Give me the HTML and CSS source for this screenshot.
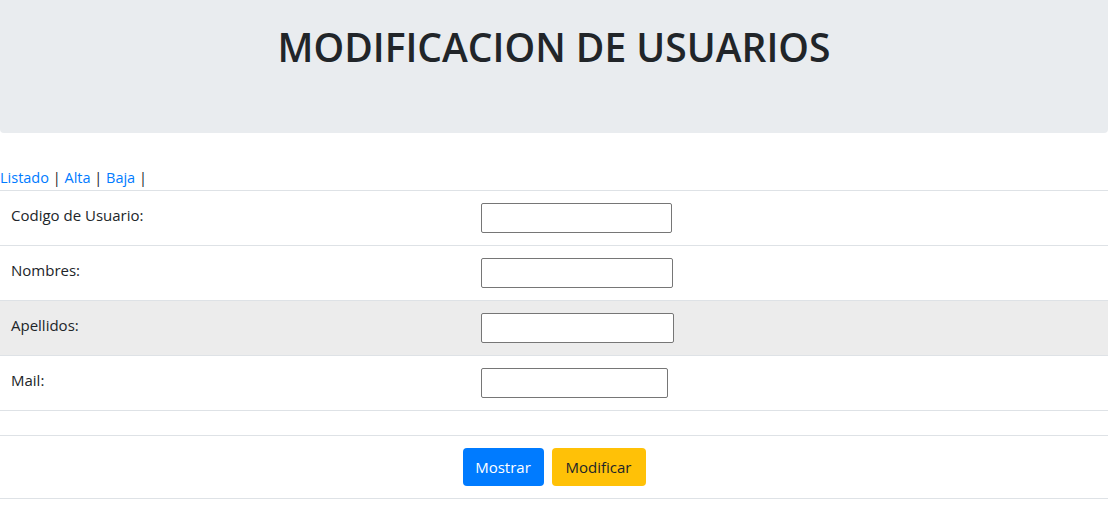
FILE: index.html
```html
<!DOCTYPE html>
<html lang="es">
<head>
<meta charset="utf-8">
<title>Modificacion de Usuarios</title>
<link rel="stylesheet" href="styles.css">
</head>
<body>
<div class="jumbotron">
  <h1 class="title">MODIFICACION DE USUARIOS</h1>
</div>
<nav class="links">
  <a href="#">Listado</a> | <a href="#">Alta</a> | <a href="#">Baja</a> |
</nav>
<div class="table">
  <div class="row">
    <div class="cell label">Codigo de Usuario:</div>
    <div class="cell"><input class="field w-191" type="text"></div>
  </div>
  <div class="row">
    <div class="cell label">Nombres:</div>
    <div class="cell"><input class="field w-192" type="text"></div>
  </div>
  <div class="row row-hover">
    <div class="cell label">Apellidos:</div>
    <div class="cell"><input class="field w-193" type="text"></div>
  </div>
  <div class="row">
    <div class="cell label">Mail:</div>
    <div class="cell"><input class="field w-187" type="text"></div>
  </div>
  <div class="row row-empty"></div>
  <div class="row row-actions">
    <button class="btn btn-primary" type="button">Mostrar</button>
    <button class="btn btn-warning" type="button">Modificar</button>
  </div>
</div>
</body>
</html>
```
FILE: styles.css
```css
* { box-sizing: border-box; }
html, body { margin: 0; padding: 0; }
body {
  font-family: "Open Sans", "Noto Sans", "Liberation Sans", sans-serif;
  font-size: 15px;
  line-height: 24px;
  color: #212529;
  background: #fff;
}
.jumbotron {
  background: #e9ecef;
  height: 133px;
  border-radius: 0 0 4px 4px;
  padding-top: 23px;
  margin-bottom: 32px;
}
.title {
  margin: 0;
  text-align: center;
  font-size: 39px;
  line-height: 48px;
  font-weight: 600;
  letter-spacing: 0;
}
.links {
  height: 25px;
  padding-top: 1px;
  font-size: 14.5px;
}
.links a { color: #007bff; text-decoration: none; }
.table { border-top: 1px solid #dee2e6; }
.row {
  display: grid;
  grid-template-columns: 469px 1fr;
  border-bottom: 1px solid #dee2e6;
  height: 55px;
}
.row-hover { background: #ececec; }
.row-empty { height: 25px; }
.row-actions {
  display: flex;
  justify-content: center;
  gap: 8px;
  height: 63px;
  padding-top: 12px;
}
.cell { padding: 12px 12px 0 12px; }
.label { padding-left: 11px; }
.field {
  display: block;
  height: 30px;
  border: 1px solid #767676;
  border-radius: 2px;
  background: #fff;
  font: inherit;
  padding: 2px 3px;
}
.w-191 { width: 191px; }
.w-192 { width: 192px; }
.w-193 { width: 193px; }
.w-187 { width: 187px; }
.btn {
  height: 38px;
  border: 0;
  border-radius: 4px;
  font: inherit;
  font-size: 15px;
  padding: 0 12px;
  cursor: pointer;
}
.btn-primary { background: #007bff; color: #fff; width: 81px; }
.btn-warning { background: #ffc107; color: #212529; width: 94px; }
```
